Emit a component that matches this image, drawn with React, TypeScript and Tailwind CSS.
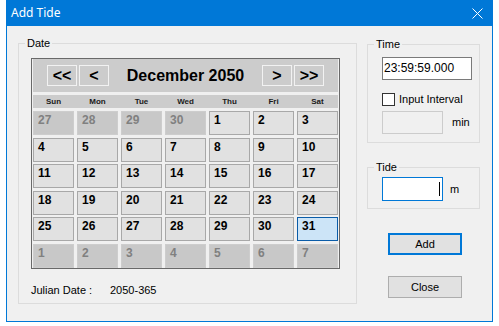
import React from 'react';

type Day = { d: number; other?: boolean; sel?: boolean };

const days: Day[] = [
    ...[27, 28, 29, 30].map((d) => ({ d, other: true })),
    ...Array.from({ length: 31 }, (_, i) => ({ d: i + 1, sel: i === 30 })),
    ...[1, 2, 3, 4, 5, 6, 7].map((d) => ({ d, other: true })),
];

const dayNames = ['Sun', 'Mon', 'Tue', 'Wed', 'Thu', 'Fri', 'Sat'];

const GroupBox: React.FC<{ label: string; className?: string; children: React.ReactNode }> = ({ label, className, children }) => (
    <fieldset className={`border border-[#dcdcdc] ${className ?? ''}`}>
        <legend className="ml-[6px] px-[2px] text-[11px] leading-[14px] text-black">{label}</legend>
        {children}
    </fieldset>
);

const NavButton: React.FC<{ label: string }> = ({ label }) => (
    <div className="w-[30px] h-[21px] bg-[#cccccc] border border-[#f2f2f2] flex items-center justify-center text-[16px] font-bold leading-none text-black">
        {label}
    </div>
);

const App: React.FC = () => {
    return (
        <div className="w-[499px] h-[326px] bg-white font-['Liberation_Sans',Arial,sans-serif] text-black">
            <div className="ml-[6px] w-[487px] h-[322px] border-x border-b border-[#0078d7] flex flex-col">
                {/* title bar */}
                <div className="h-[26px] shrink-0 bg-[#0078d7] flex items-center justify-between pl-[4px] pr-[9px]">
                    <span className="font-['Noto_Sans',sans-serif] text-[12px] text-white">Add Tide</span>
                    <svg width="11" height="11" viewBox="0 0 11 11" className="block">
                        <path d="M0.5 0.5 L10.5 10.5 M10.5 0.5 L0.5 10.5" stroke="white" strokeWidth="1" fill="none" />
                    </svg>
                </div>

                <div className="flex-1 bg-[#f0f0f0] flex items-start pl-[11px] gap-[10px]">
                    {/* Date group */}
                    <GroupBox label="Date" className="mt-[10px] w-[339px] h-[268px]">
                        <div className="pl-[12px] pt-[8px]">
                            <div className="w-[309px] border border-[#696969] bg-[#f0f0f0] px-[1px] flex flex-col">
                                <div className="h-[33px] bg-[#cccccc] flex items-center px-[14px]">
                                    <div className="flex gap-[2px]">
                                        <NavButton label="<<" />
                                        <NavButton label="<" />
                                    </div>
                                    <div className="flex-1 text-center text-[16px] font-bold leading-none">December 2050</div>
                                    <div className="flex gap-[2px]">
                                        <NavButton label=">" />
                                        <NavButton label=">>" />
                                    </div>
                                </div>
                                <div className="mt-[3px] h-[13px] bg-[#cccccc] grid grid-cols-[repeat(7,41px)] gap-x-[3px] text-[8px] font-bold leading-[13px] text-center text-[#1a1a1a]">
                                    {dayNames.map((n) => (
                                        <span key={n}>{n}</span>
                                    ))}
                                </div>
                                <div className="mt-[3px] grid grid-cols-[repeat(7,41px)] grid-rows-[repeat(6,24px)] gap-x-[3px] gap-y-[2.5px]">
                                    {days.map((c, i) => (
                                        <div
                                            key={i}
                                            className={
                                                c.other
                                                    ? 'border border-[#cdcdcd] bg-[#c8c8c8] text-[#808080] pl-[4px] pt-[1px] text-[12px] font-bold leading-[14px]'
                                                    : c.sel
                                                    ? 'border border-[#0a5ca8] bg-[#cce4f7] text-black pl-[4px] pt-[1px] text-[12px] font-bold leading-[14px]'
                                                    : 'border border-[#a8a8a8] bg-[#e1e1e1] text-black pl-[4px] pt-[1px] text-[12px] font-bold leading-[14px]'
                                            }
                                        >
                                            {c.d}
                                        </div>
                                    ))}
                                </div>
                            </div>
                            <div className="mt-[15px] flex text-[11px] leading-[13px]">
                                <span className="w-[79px]">Julian Date :</span>
                                <span>2050-365</span>
                            </div>
                        </div>
                    </GroupBox>

                    {/* right column */}
                    <div className="mt-[11px] w-[113px] flex flex-col">
                        <GroupBox label="Time" className="h-[106px]">
                            <div className="pl-[14px] pt-[6px] flex flex-col">
                                <div className="w-[90px] h-[23px] border border-[#7a7a7a] bg-white text-[12px] leading-[20px] pl-[1px]">
                                    23:59:59.000
                                </div>
                                <div className="mt-[13px] h-[13px] flex items-center gap-[4px]">
                                    <div className="w-[13px] h-[13px] border border-[#333333] bg-white" />
                                    <span className="text-[11px] leading-[13px]">Input Interval</span>
                                </div>
                                <div className="mt-[5px] flex items-center">
                                    <div className="w-[61px] h-[23px] border border-[#cccccc] bg-[#f0f0f0]" />
                                    <span className="ml-[9px] text-[11px] leading-[13px]">min</span>
                                </div>
                            </div>
                        </GroupBox>

                        <GroupBox label="Tide" className="mt-[17px] h-[49px]">
                            <div className="pl-[14px] pt-[3px] flex items-center">
                                <div className="w-[61px] h-[24px] border border-[#0078d7] bg-white flex items-center justify-end pr-[2px]">
                                    <div className="w-[1px] h-[14px] bg-black" />
                                </div>
                                <span className="ml-[7px] text-[11px] leading-[13px]">m</span>
                            </div>
                        </GroupBox>

                        <div className="mt-[24px] ml-[21px] w-[74px] h-[22px] border-2 border-[#0078d7] bg-[#e1e1e1] flex items-center justify-center text-[11px]">
                            Add
                        </div>
                        <div className="mt-[21px] ml-[21px] w-[74px] h-[22px] border border-[#adadad] bg-[#e1e1e1] flex items-center justify-center text-[11px]">
                            Close
                        </div>
                    </div>
                </div>
            </div>
        </div>
    );
};

export default App;
